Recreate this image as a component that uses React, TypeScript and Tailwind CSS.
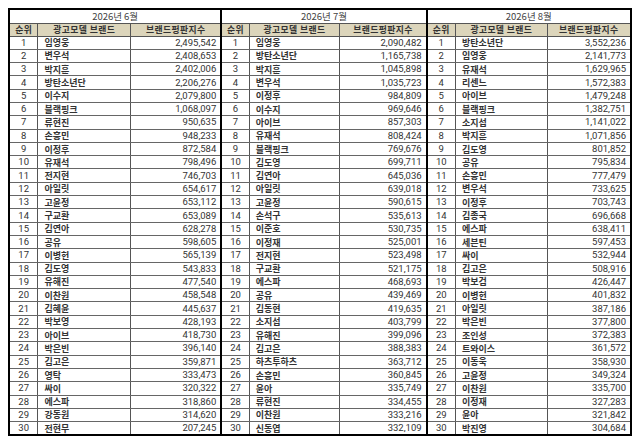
import { Fragment } from 'react';

type Row = [string, string];

const june: Row[] = [
  ['임영웅', '2,495,542'], ['변우석', '2,408,653'], ['박지훈', '2,402,006'], ['방탄소년단', '2,206,276'],
  ['이수지', '2,079,800'], ['블랙핑크', '1,068,097'], ['류현진', '950,635'], ['손흥민', '948,233'],
  ['이정후', '872,584'], ['유재석', '798,496'], ['전지현', '746,703'], ['아일릿', '654,617'],
  ['고윤정', '653,112'], ['구교환', '653,089'], ['김연아', '628,278'], ['공유', '598,605'],
  ['이병헌', '565,139'], ['김도영', '543,833'], ['유해진', '477,540'], ['이찬원', '458,548'],
  ['김혜윤', '445,637'], ['박보영', '428,193'], ['아이브', '418,730'], ['박은빈', '396,140'],
  ['김고은', '359,871'], ['영탁', '333,473'], ['싸이', '320,322'], ['에스파', '318,860'],
  ['강동원', '314,620'], ['전현무', '207,245'],
];

const july: Row[] = [
  ['임영웅', '2,090,482'], ['방탄소년단', '1,165,738'], ['박지훈', '1,045,898'], ['변우석', '1,035,723'],
  ['이정후', '984,809'], ['이수지', '969,646'], ['아이브', '857,303'], ['유재석', '808,424'],
  ['블랙핑크', '769,676'], ['김도영', '699,711'], ['김연아', '645,036'], ['아일릿', '639,018'],
  ['고윤정', '590,615'], ['손석구', '535,613'], ['이준호', '530,735'], ['이정재', '525,001'],
  ['전지현', '523,498'], ['구교환', '521,175'], ['에스파', '468,693'], ['공유', '439,469'],
  ['김동현', '419,635'], ['소지섭', '403,799'], ['유해진', '399,096'], ['김고은', '388,383'],
  ['하츠투하츠', '363,712'], ['손흥민', '360,845'], ['윤아', '335,749'], ['류현진', '334,455'],
  ['이찬원', '333,216'], ['신동엽', '332,109'],
];

const august: Row[] = [
  ['방탄소년단', '3,552,236'], ['임영웅', '2,141,773'], ['유재석', '1,629,965'], ['리센느', '1,572,383'],
  ['아이브', '1,479,248'], ['블랙핑크', '1,382,751'], ['소지섭', '1,141,022'], ['박지훈', '1,071,856'],
  ['김도영', '801,852'], ['공유', '795,834'], ['손흥민', '777,479'], ['변우석', '733,625'],
  ['이정후', '703,743'], ['김종국', '696,668'], ['에스파', '638,411'], ['세븐틴', '597,453'],
  ['싸이', '532,944'], ['김고은', '508,916'], ['박보검', '426,447'], ['이병헌', '401,832'],
  ['아일릿', '387,186'], ['박은빈', '377,800'], ['조인성', '372,383'], ['트와이스', '361,572'],
  ['이동욱', '358,930'], ['고윤정', '349,324'], ['이찬원', '335,700'], ['이정재', '327,283'],
  ['윤아', '321,842'], ['박진영', '304,684'],
];

const months = [
  { title: '2026년 6월', rows: june },
  { title: '2026년 7월', rows: july },
  { title: '2026년 8월', rows: august },
];

// column widths per month group: rank / brand / score
const widths = [
  [29, 93, 91],
  [28, 91, 87],
  [29, 92, 84],
];

const headCell =
  'border-l border-l-[#555] border-b border-b-[#555] p-0 font-bold text-[8.8px] leading-[11px] text-[#333] tracking-[0.4px]';

export default function App() {
  return (
    <div className="w-[640px] h-[441px] bg-white p-2 text-[10px] leading-[12px] text-[#222] font-[family-name:'Noto_Sans_CJK_KR','Noto_Sans',sans-serif]">
      <table className="table-fixed border-collapse border-2 border-black">
        <colgroup>
          {widths.flat().map((w, i) => (
            <col key={i} style={{ width: w }} />
          ))}
        </colgroup>
        <thead>
          <tr className="h-[14px]">
            {months.map((m) => (
              <th
                key={m.title}
                colSpan={3}
                className="border-l-2 border-black border-b border-b-[#555] p-0 font-normal text-[9.5px] leading-[12px] text-[#444] text-center"
              >
                {m.title}
              </th>
            ))}
          </tr>
          <tr className="h-[13px] bg-[#dcd5bb]">
            {months.map((m) => (
              <Fragment key={m.title}>
                <th className={headCell + ' border-l-2 border-l-black'}>순위</th>
                <th className={headCell}>광고모델 브랜드</th>
                <th className={headCell}>브랜드평판지수</th>
              </Fragment>
            ))}
          </tr>
        </thead>
        <tbody>
          {june.map((_, r) => (
            <tr key={r} className="h-[13.3px]">
              {months.map((m) => (
                <Fragment key={m.title}>
                  <td className="border-l-2 border-black border-b border-b-[#666] p-0 text-center text-[9.5px] text-[#333] font-[family-name:Roboto,sans-serif]">
                    {r + 1}
                  </td>
                  <td className="border-l border-l-[#555] border-b border-b-[#666] p-0 pl-[6px] font-bold text-[9px] leading-[11px] text-[#333] whitespace-nowrap">
                    {m.rows[r][0]}
                  </td>
                  <td className="border-l border-l-[#555] border-b border-b-[#666] p-0 pr-[4px] text-right text-[9.5px] text-[#333] font-[family-name:Roboto,sans-serif]">
                    {m.rows[r][1]}
                  </td>
                </Fragment>
              ))}
            </tr>
          ))}
        </tbody>
      </table>
    </div>
  );
}
